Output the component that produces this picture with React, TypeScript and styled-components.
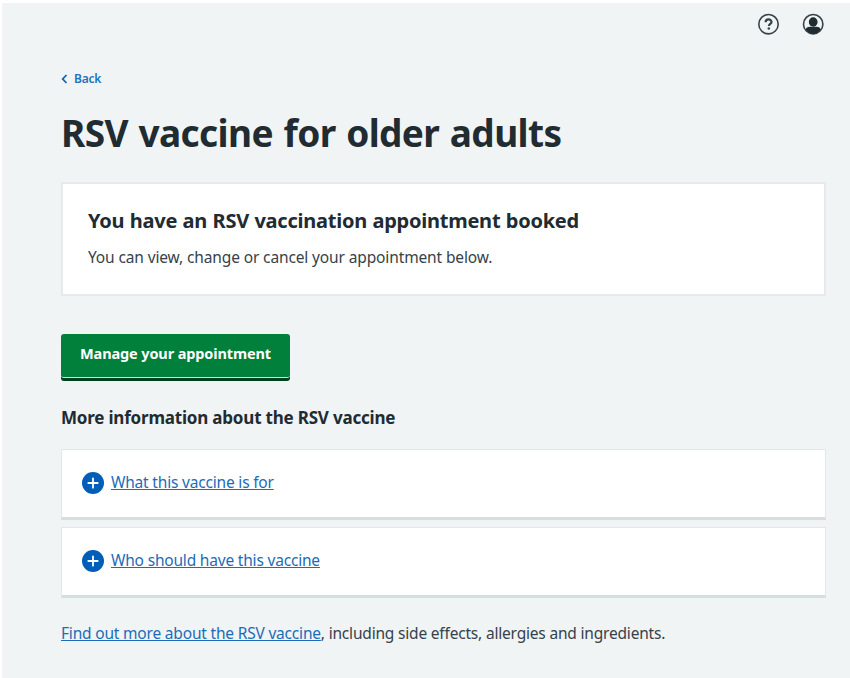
import React from "react";
import styled, { createGlobalStyle } from "styled-components";

const GlobalStyle = createGlobalStyle`
  *, *::before, *::after { box-sizing: border-box; }
  body {
    margin: 0;
    background: #fff;
    color: #212b32;
    font-family: "Noto Sans", "Open Sans", sans-serif;
  }
  h1, h2, h3, p { margin: 0; }
`;

const Page = styled.div`
  min-height: 675px;
  margin: 3px 0 0 2px;
  background: #f0f4f5;
`;

const TopBar = styled.header`
  display: flex;
  justify-content: flex-end;
  gap: 21px;
  height: 66px;
  padding: 9px 25px 0 0;
`;

const IconButton = styled.button`
  display: flex;
  width: 24px;
  height: 24px;
  padding: 0;
  border: 0;
  background: none;
  color: #36434a;
`;

const Main = styled.main`
  display: flex;
  flex-direction: column;
  align-items: flex-start;
  width: 765px;
  margin-left: 59px;
`;

const BackLink = styled.a`
  display: flex;
  align-items: center;
  gap: 6px;
  height: 20px;
  color: #2173bd;
  font-size: 12px;
  font-weight: 600;
  line-height: 20px;
  letter-spacing: -0.2px;
`;

const Title = styled.h1`
  margin-top: 19px;
  font-size: 37px;
  font-weight: 700;
  line-height: 50px;
  letter-spacing: -0.6px;
  word-spacing: 1.5px;
  white-space: nowrap;
`;

const Notice = styled.section`
  width: 100%;
  height: 114px;
  margin-top: 24px;
  padding: 23px 25px 22px;
  border: 2px solid #e6eaec;
  background: #fff;
`;

const NoticeTitle = styled.h2`
  font-size: 20px;
  font-weight: 700;
  line-height: 28px;
  letter-spacing: -0.24px;
  word-spacing: 0.5px;
`;

const Text = styled.p<{ $top: number; $tracking: number }>`
  margin-top: ${(p) => p.$top}px;
  color: #36424a;
  font-size: 15.5px;
  line-height: 24px;
  letter-spacing: ${(p) => p.$tracking}px;
  white-space: nowrap;
`;

const PrimaryButton = styled.button`
  width: 229px;
  height: 44px;
  margin-top: 38px;
  padding: 0 0 6px;
  border: 0;
  border-bottom: 1px solid #cfe3d9;
  border-radius: 3px;
  background: #00803b;
  box-shadow: 0 3px 0 #00401e;
  color: #fff;
  font-family: inherit;
  font-size: 14.5px;
  font-weight: 700;
  line-height: 24px;
  letter-spacing: -0.12px;
  white-space: nowrap;
`;

const SectionTitle = styled.h3`
  margin-top: 28px;
  font-size: 17px;
  font-weight: 700;
  line-height: 24px;
  letter-spacing: -0.2px;
`;

const DetailsList = styled.div`
  display: flex;
  flex-direction: column;
  gap: 7px;
  width: 100%;
  margin-top: 19px;
`;

const DetailsCard = styled.div`
  display: flex;
  align-items: center;
  gap: 7px;
  height: 71px;
  padding: 0 20px 1px;
  border: 1px solid #e2e7e9;
  border-bottom: 3px solid #d8dde0;
  background: #fff;
`;

const Link = styled.a`
  color: #1c6cb8;
  text-decoration: underline;
  text-decoration-thickness: 1px;
  text-underline-offset: 1px;
  text-decoration-skip-ink: none;
`;

const DetailsLink = styled(Link)`
  padding-bottom: 2px;
  font-size: 15.5px;
  line-height: 24px;
  letter-spacing: -0.19px;
`;

const PlusIcon = () => (
  <svg width="22" height="22" viewBox="0 0 22 22" aria-hidden="true">
    <circle cx="11" cy="11" r="11" fill="#005eb8" />
    <path d="M11 6.3v9.400M6.300 11h9.400" stroke="#fff" strokeWidth="1.8" strokeLinecap="round" />
  </svg>
);

const HelpIcon = () => (
  <svg width="24" height="24" viewBox="0 0 24 24" fill="none" stroke="currentColor">
    <circle cx="12.5" cy="12.2" r="9.7" strokeWidth="1.6" />
    <path d="M9.6 10.200c0-3.600 5.900-3.600 5.900-.3 0 1.900-2.600 2-2.600 4.100" strokeWidth="2.200" />
    <circle cx="12.800" cy="16.400" r="1.250" fill="currentColor" stroke="none" />
  </svg>
);

const AccountIcon = () => (
  <svg width="24" height="24" viewBox="0 0 24 24">
    <circle cx="12.2" cy="12.200" r="9.700" fill="none" stroke="currentColor" strokeWidth="1.600" />
    <ellipse cx="12.200" cy="10" rx="4.400" ry="4.700" fill="#212b32" />
    <path d="M4.600 17.600c.4-1.900 1.800-2.700 4.400-2.900h6.400c2.600.2 4 1 4.400 2.900-1.800 2.800-4.400 4.300-7.600 4.300s-5.800-1.500-7.600-4.300z" fill="#212b32" />
  </svg>
);

const BackIcon = () => (
  <svg width="7" height="10" viewBox="0 0 7 10" fill="none" aria-hidden="true">
    <path d="M5.500 1 1.700 5l3.800 4" stroke="#1565b5" strokeWidth="1.800" />
  </svg>
);

const topics = ["What this vaccine is for", "Who should have this vaccine"];

export default function App() {
  return (
    <>
      <GlobalStyle />
      <Page>
        <TopBar>
          <IconButton aria-label="Help"><HelpIcon /></IconButton>
          <IconButton aria-label="Account"><AccountIcon /></IconButton>
        </TopBar>
        <Main>
          <BackLink><BackIcon />Back</BackLink>
          <Title>RSV vaccine for older adults</Title>
          <Notice>
            <NoticeTitle>You have an RSV vaccination appointment booked</NoticeTitle>
            <Text $top={10} $tracking={-0.13}>You can view, change or cancel your appointment below.</Text>
          </Notice>
          <PrimaryButton>Manage your appointment</PrimaryButton>
          <SectionTitle>More information about the RSV vaccine</SectionTitle>
          <DetailsList>
            {topics.map((topic) => (
              <DetailsCard key={topic}>
                <PlusIcon />
                <DetailsLink>{topic}</DetailsLink>
              </DetailsCard>
            ))}
          </DetailsList>
          <Text $top={23} $tracking={-0.19}>
            <Link>Find out more about the RSV vaccine</Link>, including side effects, allergies and ingredients.
          </Text>
        </Main>
      </Page>
    </>
  );
}
